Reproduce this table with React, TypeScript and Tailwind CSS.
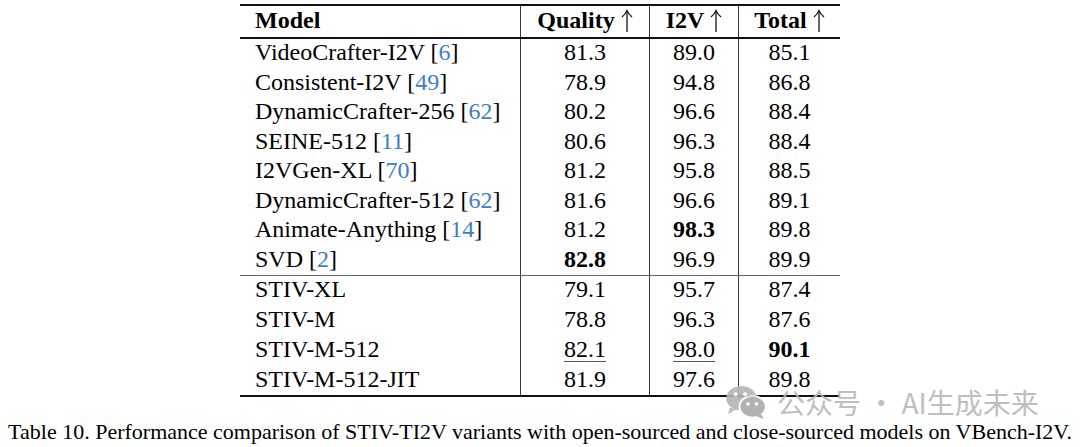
import React from "react";

type Row = {
  name: string;
  cite?: string;
  q: string;
  i: string;
  t: string;
  qb?: boolean;
  ib?: boolean;
  tb?: boolean;
  qu?: boolean;
  iu?: boolean;
};

const top: Row[] = [
  { name: "VideoCrafter-I2V", cite: "6", q: "81.3", i: "89.0", t: "85.1" },
  { name: "Consistent-I2V", cite: "49", q: "78.9", i: "94.8", t: "86.8" },
  { name: "DynamicCrafter-256", cite: "62", q: "80.2", i: "96.6", t: "88.4" },
  { name: "SEINE-512", cite: "11", q: "80.6", i: "96.3", t: "88.4" },
  { name: "I2VGen-XL", cite: "70", q: "81.2", i: "95.8", t: "88.5" },
  { name: "DynamicCrafter-512", cite: "62", q: "81.6", i: "96.6", t: "89.1" },
  { name: "Animate-Anything", cite: "14", q: "81.2", i: "98.3", t: "89.8", ib: true },
  { name: "SVD", cite: "2", q: "82.8", i: "96.9", t: "89.9", qb: true },
];

const bottom: Row[] = [
  { name: "STIV-XL", q: "79.1", i: "95.7", t: "87.4" },
  { name: "STIV-M", q: "78.8", i: "96.3", t: "87.6" },
  { name: "STIV-M-512", q: "82.1", i: "98.0", t: "90.1", qu: true, iu: true, tb: true },
  { name: "STIV-M-512-JIT", q: "81.9", i: "97.6", t: "89.8" },
];

function Cell({ v, b, u, w, last }: { v: string; b?: boolean; u?: boolean; w: string; last?: boolean }) {
  return (
    <div className={`${w} ${last ? "" : "border-r border-[#3a3a3a]"} flex items-center justify-center pb-[3px]`}>
      <span
        className={`${b ? "font-bold" : ""} ${u ? "underline decoration-[1px] underline-offset-[4px] decoration-[#555]" : ""}`}
      >
        {v}
      </span>
    </div>
  );
}

function BodyRow({ r, h }: { r: Row; h: string }) {
  return (
    <div className={`flex ${h}`}>
      <div className="w-[281px] border-r border-[#3a3a3a] flex items-center pl-[15px] pb-[3px] whitespace-nowrap">
        <span>
          {r.name}
          {r.cite && (
            <>
              {" "}[<span className="text-[#3d7ec4]">{r.cite}</span>]
            </>
          )}
        </span>
      </div>
      <Cell v={r.q} b={r.qb} u={r.qu} w="w-[129px]" />
      <Cell v={r.i} b={r.ib} u={r.iu} w="w-[89px]" />
      <Cell v={r.t} b={r.tb} w="w-[101px]" last />
    </div>
  );
}

function WeChat() {
  return (
    <svg width="44" height="34" viewBox="0 0 46 36">
      <ellipse cx="17" cy="14" rx="16" ry="13" fill="#b4b4b4" />
      <path d="M5 24 L3 31 L11 26 Z" fill="#b4b4b4" />
      <ellipse cx="29" cy="23" rx="14" ry="11.5" fill="#a9a9a9" stroke="#fff" strokeWidth="2" />
      <path d="M38 31 L41 36 L33 33 Z" fill="#a9a9a9" />
      <circle cx="11" cy="10" r="2.2" fill="#fff" />
      <circle cx="21" cy="10" r="2.2" fill="#fff" />
      <circle cx="24" cy="20" r="1.9" fill="#fff" />
      <circle cx="33" cy="20" r="1.9" fill="#fff" />
    </svg>
  );
}

function Arrow() {
  return (
    <svg width="12" height="24" viewBox="0 0 12 24" className="ml-[6px] mt-[2px]">
      <path d="M6 2 L6 23" stroke="#111" strokeWidth="1.3" fill="none" />
      <path d="M1 8 Q4.5 5 6 1.5 Q7.5 5 11 8" stroke="#111" strokeWidth="1.2" fill="none" />
    </svg>
  );
}

export default function App() {
  return (
    <div className="relative w-[1080px] h-[447px] bg-white overflow-hidden text-black" style={{ fontFamily: '"Liberation Serif", "Times New Roman", serif' }}>
      <div className="pt-[4px] pl-[240px]">
        <div className="w-[600px] text-[24px] leading-none">
          <div className="h-[2px] bg-[#111]" />
          <div className="flex h-[31px] font-bold">
            <div className="w-[281px] border-r border-[#3a3a3a] flex items-center pl-[15px] pb-[4px]">Model</div>
            <div className="w-[129px] border-r border-[#3a3a3a] flex items-center justify-center pb-[4px]">
              Quality <Arrow />
            </div>
            <div className="w-[89px] border-r border-[#3a3a3a] flex items-center justify-center pb-[4px]">
              I2V <Arrow />
            </div>
            <div className="w-[101px] flex items-center justify-center pb-[4px]">
              Total <Arrow />
            </div>
          </div>
          <div className="h-[2px] bg-[#111]" />
          {top.map((r) => (
            <BodyRow key={r.name} r={r} h="h-[29.5px]" />
          ))}
          <div className="h-[1px] bg-[#666]" />
          {bottom.map((r) => (
            <BodyRow key={r.name} r={r} h="h-[29.75px]" />
          ))}
          <div className="h-[2px] bg-[#111]" />
        </div>
      </div>
      <div className="mt-[24px] text-center text-[22px] leading-none whitespace-nowrap">
        Table 10. Performance comparison of STIV-TI2V variants with open-sourced and close-sourced models on VBench-I2V.
      </div>
      <div className="absolute left-[725px] top-[385px] flex items-center gap-[8px] opacity-90">
        <WeChat />
        <span className="text-[28px] leading-none text-[#b8b8b8]" style={{ fontFamily: '"Noto Sans CJK SC", "Noto Sans", sans-serif' }}>
          公众号 · AI生成未来
        </span>
      </div>
    </div>
  );
}
